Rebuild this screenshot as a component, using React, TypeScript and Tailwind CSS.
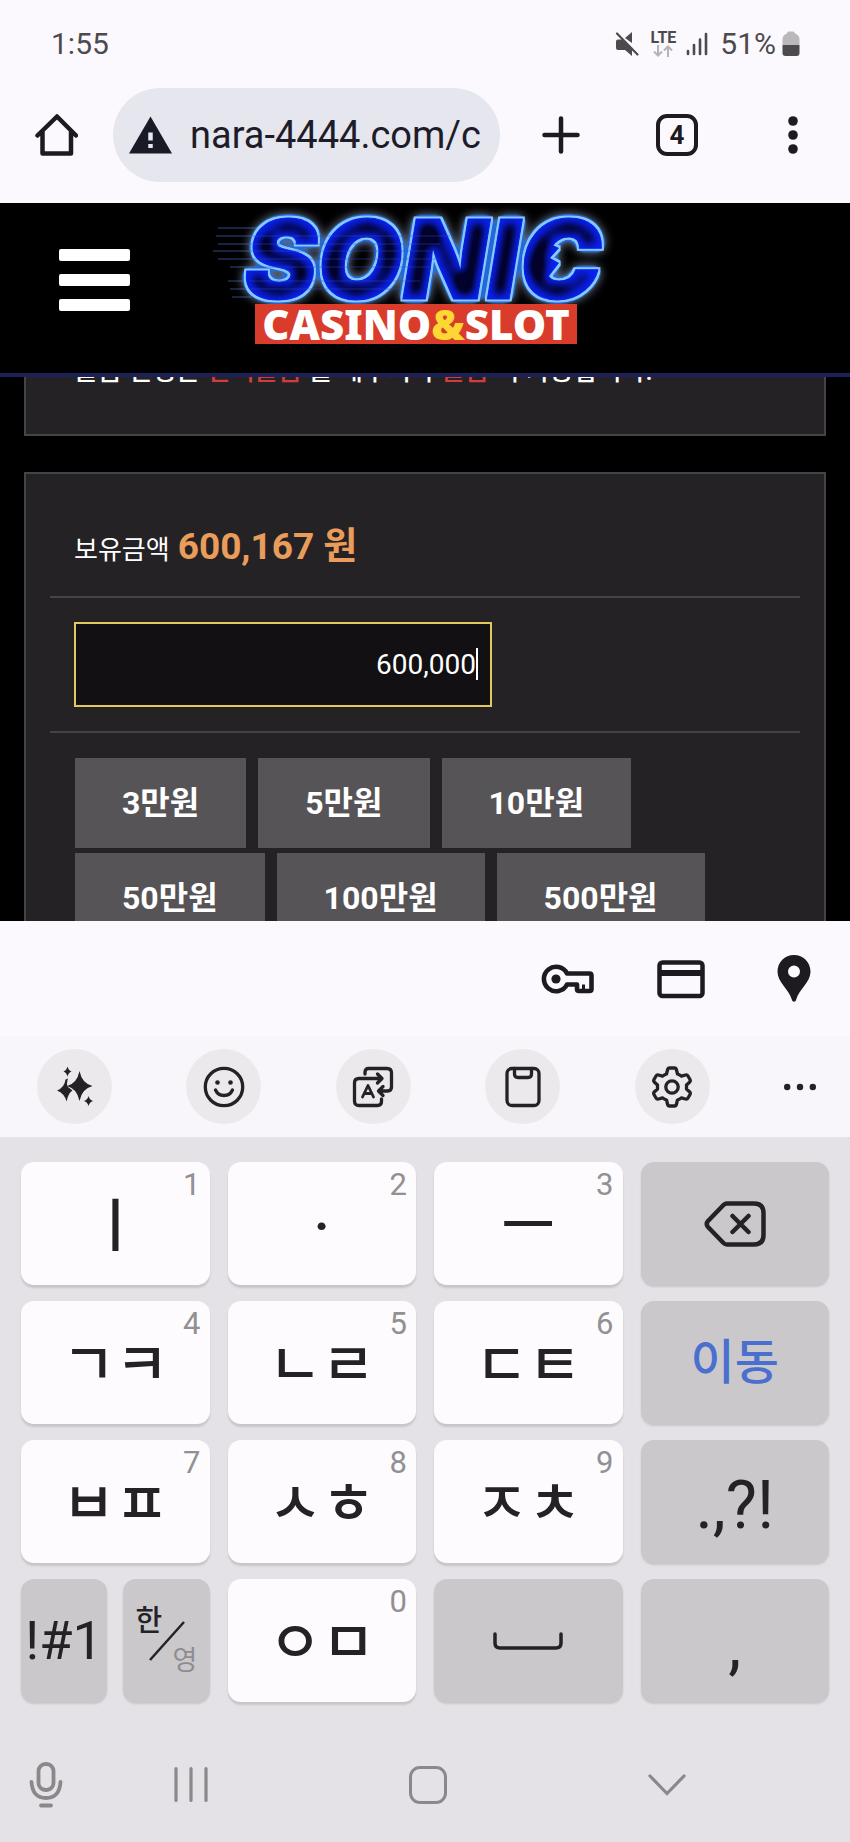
import React from 'react';

const fontStack = "font-[Roboto,'Noto_Sans_CJK_KR',sans-serif]";

const amountRows = [
  ['3만원', '5만원', '10만원'],
  ['50만원', '100만원', '500만원'],
];

function StatusBar() {
  return (
    <div className="flex h-[88px] items-center justify-between pl-[51px] pr-[50px] text-[30px] leading-none text-[#4c4a4d]">
      <span>1:55</span>
      <div className="flex items-center">
        {/* 음소거 */}
        <svg className="h-6 w-6" viewBox="0 0 24 24" fill="#4c4a4d">
          <path d="M1 9.500q0-2 2-2h4L17 17v7l-7-6H3q-2-0-2-2z" />
          <path d="M10 6l7-6v11z" />
          <path d="M2 1.500L22.500 22.500" stroke="#4c4a4d" strokeWidth="2.200" strokeLinecap="round" />
        </svg>
        <div className="ml-3 flex flex-col items-center">
          <span className="text-[16px] font-bold leading-[14px]">LTE</span>
          <svg className="h-3 w-5" viewBox="0 0 20 12" fill="none" stroke="#b5b3b6" strokeWidth="2">
            <path d="M5 0v10M1 6.500l4 4 4-4M15 12V2M11 5.500l4-4 4 4" />
          </svg>
        </div>
        <svg className="ml-[10px] h-6 w-[22px]" viewBox="0 0 22 24" stroke="#4c4a4d" strokeWidth="2.600" strokeLinecap="round">
          <path d="M2 19v3M8 13v9M14 7.500V22M20 2v20" />
        </svg>
        <span className="ml-3">51%</span>
        <svg className="ml-[6px] h-[26px] w-[18px]" viewBox="0 0 18 26">
          <path d="M5 2.500Q5 .5 7 .5h4q2 0 2 2Q17.500 4 17.500 8v6H.5V8Q.5 4 5 2.500z" fill="#bab8bb" />
          <path d="M.5 14h17v8q0 3-3 3h-11q-3 0-3-3z" fill="#4c4a4d" />
        </svg>
      </div>
    </div>
  );
}

function BrowserBar() {
  return (
    <div className="flex items-center pb-[21px] pl-[34px] pr-9">
      <button aria-label="홈" className="h-11 w-11">
        <svg viewBox="0 0 44 44" fill="none" stroke="#1d1b20" strokeWidth="4.500" strokeLinejoin="round" strokeLinecap="round">
          <path d="M3.500 22.500L23 3.500l19 19M8.500 19v21.500h28.500V19" />
        </svg>
      </button>
      <label className="ml-[35px] flex h-[94px] min-w-0 flex-1 items-center rounded-full bg-[#e5e6ee] pl-4 pr-[14px]">
        <svg className="h-[38px] w-[43px] shrink-0" viewBox="0 0 43 38">
          <path d="M21.500 .5L43 37.500H0z" fill="#181a26" />
          <path d="M21.500 16.500v8M21.500 28v4" stroke="#e5e6ee" strokeWidth="4.500" />
        </svg>
        <input
          aria-label="주소"
          defaultValue="nara-4444.com/c"
          className="ml-[18px] w-full min-w-0 bg-transparent text-[38px] leading-[48px] text-[#1d1c28] outline-none"
        />
      </label>
      <div className="ml-10 flex items-center gap-[74px]">
        <button aria-label="새 탭" className="h-[42px] w-[42px]">
          <svg viewBox="0 0 42 42" stroke="#1d1b20" strokeWidth="4.500" strokeLinecap="round">
            <path d="M21 4.500v33M4.500 21h33" />
          </svg>
        </button>
        <button className="flex h-[42px] w-[42px] items-center justify-center rounded-[11px] border-4 border-[#1d1b20] text-[26px] font-bold leading-none text-[#1d1b20]">
          4
        </button>
        <button aria-label="메뉴" className="h-[42px] w-[42px]">
          <svg viewBox="0 0 42 42" fill="#1d1b20">
            <circle cx="21" cy="7" r="4.800" />
            <circle cx="21" cy="21" r="4.800" />
            <circle cx="21" cy="35" r="4.800" />
          </svg>
        </button>
      </div>
    </div>
  );
}

function Logo() {
  return (
    <a href="#" className="flex w-[400px] flex-col">
      <svg className="h-[101px] w-full overflow-visible" viewBox="0 0 400 101">
        <defs>
          {/* 네온 효과: 외곽 글로우 + 파란 테두리 + 어두운 중심 */}
          <filter id="neon" x="-15%" y="-30%" width="130%" height="160%" colorInterpolationFilters="sRGB">
            <feGaussianBlur in="SourceAlpha" stdDeviation="3.500" result="soft" />
            <feComponentTransfer in="soft" result="halo">
              <feFuncA type="linear" slope="10" intercept="-1" />
            </feComponentTransfer>
            <feFlood floodColor="#2468d6" />
            <feComposite in2="halo" operator="in" result="haloBlue" />
            <feGaussianBlur in="halo" stdDeviation="5" result="glow" />
            <feFlood floodColor="#8494b4" floodOpacity="0.85" />
            <feComposite in2="glow" operator="in" result="glowColor" />
            <feMorphology in="SourceAlpha" operator="dilate" radius="1.500" result="edge" />
            <feFlood floodColor="#84caff" />
            <feComposite in2="edge" operator="in" result="edgeColor" />
            <feFlood floodColor="#0a20ee" />
            <feComposite in2="SourceAlpha" operator="in" result="body" />
            <feMorphology in="SourceAlpha" operator="erode" radius="6" result="thin" />
            <feGaussianBlur in="thin" stdDeviation="4" result="thinSoft" />
            <feComponentTransfer in="thinSoft" result="core">
              <feFuncA type="linear" slope="1.500" />
            </feComponentTransfer>
            <feFlood floodColor="#02022c" />
            <feComposite in2="core" operator="in" result="coreColor" />
            <feComposite in="coreColor" in2="SourceAlpha" operator="in" result="coreClip" />
            <feMerge>
              <feMergeNode in="glowColor" />
              <feMergeNode in="haloBlue" />
              <feMergeNode in="edgeColor" />
              <feMergeNode in="body" />
              <feMergeNode in="coreClip" />
            </feMerge>
          </filter>
        </defs>
        <path d="M8 25h50M6 33h50M8 41h40M3 48h50M8 56h40M20 64h30M18 78h20M20 86h20M22 94h20" stroke="#2a4a86" strokeWidth="1.200" />
        <g filter="url(#neon)">
          <text x="34" y="96" className="font-[Inter,sans-serif] text-[110px] font-black italic" stroke="#000" strokeWidth="1">
            SONIC
          </text>
          {/* C 안쪽 가시 */}
          <path d="M334 38l15 7-9 10 9 5-10 13-15-4z" />
        </g>
        <path d="M40 33h200M40 41h190M40 48h180M40 56h190M40 64h180M40 78h170M40 86h150" stroke="#2d4fc4" strokeWidth="1" opacity="0.45" />
      </svg>
      <div className="ml-[45px] flex h-10 w-[322px] items-center justify-center bg-[#d93c2b] font-['Noto_Sans',sans-serif] text-[42px] font-black leading-none text-white">
        CASINO<span className="text-[#fdd835]">&amp;</span>SLOT
      </div>
    </a>
  );
}

function SiteHeader() {
  return (
    <header className="relative z-10 flex h-[174px] items-start gap-20 border-b-4 border-[#1c2158] bg-black pl-[59px]">
      <button aria-label="메뉴 열기" className="mt-[46px] flex w-[71px] flex-col gap-[13px]">
        <span className="h-3 w-full rounded-[2px] bg-white" />
        <span className="h-3 w-full rounded-[2px] bg-white" />
        <span className="h-3 w-full rounded-[2px] bg-white" />
      </button>
      <Logo />
    </header>
  );
}

function WithdrawPage() {
  return (
    <main className="flex h-[544px] flex-col overflow-hidden bg-black px-6 text-white">
      {/* 안내 문구 (헤더 아래로 스크롤됨) */}
      <section className="-mt-10 shrink-0 border-2 border-[#454347] bg-[#242224] px-12 pb-[49px] pt-[18px]">
        <p className="whitespace-nowrap text-[26px] font-medium leading-7">
          출금 신청은 <span className="text-[#d23c3c]">전액출금</span> 을 해주셔야 <span className="text-[#d23c3c]">출금</span> 이 가능합니다.
        </p>
      </section>

      <section className="mt-9 shrink-0 border-2 border-[#454347] bg-[#242224] px-6 pt-12">
        <p className="flex h-[76px] items-start gap-2 border-b-2 border-[#454347] px-6 text-[26px] leading-[56px]">
          보유금액 <strong className="text-[37px] font-bold leading-[50px] text-[#ea9d5b]">600,167 원</strong>
        </p>
        <div className="border-b-2 border-[#454347] px-6 py-6">
          <div className="relative w-[418px]">
            <input
              aria-label="출금금액"
              defaultValue="600,000"
              className="block h-[85px] w-full border-2 border-[#e2c95f] bg-[#121012] pr-[14px] text-right text-[28px] outline-none"
            />
            <span className="absolute right-[14px] top-[26px] h-8 w-[2px] bg-white" />
          </div>
        </div>
        <div className="flex flex-col gap-[5px] px-[25px] pt-[25px]">
          {amountRows.map((row) => (
            <div key={row[0]} className="flex gap-3">
              {row.map((label) => (
                <button key={label} className="h-[90px] bg-[#565457] px-[47px] text-[32px] font-bold">
                  {label}
                </button>
              ))}
            </div>
          ))}
        </div>
      </section>
    </main>
  );
}

function AutofillBar() {
  return (
    <div className="flex h-[115px] items-center justify-end gap-[57px] bg-[#fcf9fe] pr-[28px]">
      <button aria-label="비밀번호" className="h-14 w-14">
        <svg viewBox="0 0 56 56" fill="none" stroke="#1d1b20" strokeWidth="4.600" strokeLinejoin="round">
          <path d="M27 22.500A12.200 12.200 0 1 0 27 33.500H37V38q0 2 2 2H49.500q2 0 2-2V24.500q0-2-2-2z" />
          <circle cx="16" cy="28" r="4.600" fill="#1d1b20" stroke="none" />
          <path d="M43.500 40v-6.500" strokeWidth="3" />
        </svg>
      </button>
      <button aria-label="결제 수단" className="h-14 w-14">
        <svg viewBox="0 0 56 56" fill="none" stroke="#1d1b20">
          <rect x="6.500" y="11.500" width="43" height="33.500" rx="3" strokeWidth="4.500" />
          <path d="M6 22h44" strokeWidth="6" />
        </svg>
      </button>
      <button aria-label="주소" className="h-14 w-14">
        <svg viewBox="0 0 56 56" fill="#1d1b20">
          <path fillRule="evenodd" d="M28 4c-9.200 0-16.500 7.300-16.500 16.500 0 11 11 17 14.300 28 .7 3 3.700 3 4.400 0 3.300-11 14.300-17 14.300-28C44.500 11.300 37.200 4 28 4zm0 10.500a6 6 0 1 1 0 12 6 6 0 0 1 0-12z" />
        </svg>
      </button>
    </div>
  );
}

function ToolButton({ label, children }: { label: string; children: React.ReactNode }) {
  return (
    <button aria-label={label} className="flex h-[75px] w-[75px] items-center justify-center rounded-full bg-[#ebe9ec]">
      <svg className="h-11 w-11" viewBox="0 0 44 44" fill="none" stroke="#242226" strokeWidth="3.300" strokeLinecap="round" strokeLinejoin="round">
        {children}
      </svg>
    </button>
  );
}

function KeyboardTools() {
  return (
    <div className="flex h-[101px] items-center justify-between bg-[#f8f6fa] pl-[37px] pr-[34px]">
      <ToolButton label="AI">
        <g fill="#242226" stroke="none">
          <path d="M26.500 6q2.500 12.500 13 15-10.500 2.500-13 15-2.500-12.500-12.500-15Q24 18.500 26.500 6z" />
          <path d="M14.500 1.500q1 4 4 5-3 1-4 5-1-4-4-5 3-1 4-5z" />
          <path d="M35.500 31q1 4 4.500 5-3.500 1-4.500 5-1-4-4.500-5 3.500-1 4.500-5z" />
          <path d="M12.500 14.500l2.500-1q-2 6 0 8.500l4.500 3.500q-4 2-6 11-2-8-9.500-11 7.500-3 8.500-11z" />
        </g>
      </ToolButton>
      <ToolButton label="이모티콘">
        <circle cx="22" cy="22" r="18.700" />
        <path d="M13.500 25q2.500 5.500 8.500 5.500t8.500-5.500" />
        <circle cx="15.500" cy="17.500" r="2.300" fill="#242226" stroke="none" />
        <circle cx="28.500" cy="17.500" r="2.300" fill="#242226" stroke="none" />
      </ToolButton>
      <ToolButton label="번역">
        <path d="M14 9V7q0-3.500 3.500-3.500H36q4.500 0 4.500 4.500v14q0 4-4 4h-8M32 21.500L27.500 26l4.500 4.500" />
        <path d="M30.500 34v2.500q0 4-4 4H8q-4.500 0-4.500-4.500V18q0-4.500 4.500-4.500h23M26.500 9l4.500 4.500-4.500 4.500" />
        <path d="M11.500 32L17 20.500 22.500 32M13.500 28.500h7" strokeWidth="2.800" />
      </ToolButton>
      <ToolButton label="클립보드">
        <rect x="6" y="3.500" width="32" height="37" rx="5" />
        <path d="M13.500 3.500V9q0 3.500 3.500 3.500h10q3.500 0 3.500-3.500V3.500" />
      </ToolButton>
      <ToolButton label="설정">
        {/* 톱니 6개 */}
        <path d="M17.500 5q.5-2 2-2h5q1.500 0 2 2l1 4q2 .7 4 2.200l4-1.200q1.700-.5 2.500 1l2 3.500q.8 1.500-.5 2.700l-3 2.800v4l3 2.800q1.300 1.200.5 2.700l-2 3.500q-.8 1.500-2.500 1l-4-1.200q-2 1.500-4 2.200l-1 4q-.5 2-2 2h-5q-1.500 0-2-2l-1-4q-2-.7-4-2.200l-4 1.200q-1.700.5-2.500-1l-2-3.500q-.8-1.500.5-2.700l3-2.800v-4l-3-2.800q-1.300-1.200-.5-2.700l2-3.500q.8-1.500 2.500-1l4 1.200q2-1.500 4-2.200z" />
        <circle cx="22" cy="22" r="6.200" />
      </ToolButton>
      <button aria-label="더보기" className="h-8 w-8">
        <svg viewBox="0 0 32 32" fill="#242226">
          <circle cx="3.200" cy="16" r="3.200" />
          <circle cx="16" cy="16" r="3.200" />
          <circle cx="28.800" cy="16" r="3.200" />
        </svg>
      </button>
    </div>
  );
}

function LetterKey({ letters, hint }: { letters: string; hint: string }) {
  return (
    <button className="relative flex h-[123px] items-center justify-center rounded-[13px] bg-[#fdfbfe] pt-1 text-[58px] font-medium leading-none text-[#242226] shadow-[0_3px_2px_#c8c6c9]">
      <span>{letters}</span>
      <span className="absolute right-[9px] top-[7px] text-[31px] font-normal leading-8 text-[#929093]">{hint}</span>
    </button>
  );
}

function FunctionKey({ label, className = 'text-[#242226]', children }: { label: string; className?: string; children: React.ReactNode }) {
  return (
    <button
      aria-label={label}
      className={`flex h-[123px] items-center justify-center rounded-[13px] bg-[#cac8cb] shadow-[0_2px_2px_#c8c6c9] ${className}`}
    >
      {children}
    </button>
  );
}

function Keyboard() {
  return (
    <div className="grid grid-cols-4 gap-x-[18px] gap-y-4 px-[21px] pt-[25px]">
      <LetterKey letters="ㅣ" hint="1" />
      <LetterKey letters="·" hint="2" />
      <LetterKey letters="ㅡ" hint="3" />
      <FunctionKey label="지우기">
        <svg className="h-[46px] w-[62px]" viewBox="0 0 62 46" fill="none" stroke="#242226" strokeWidth="4.500" strokeLinecap="round" strokeLinejoin="round">
          <path d="M23 2.500h27q9.500 0 9.500 9.500v22q0 9.500-9.500 9.500H23q-2 0-3.500-1.500L4 26q-2.500-3 0-6L19.500 4q1.500-1.500 3.500-1.500zM28.500 15l16 16M44.500 15l-16 16" />
        </svg>
      </FunctionKey>

      <LetterKey letters="ㄱㅋ" hint="4" />
      <LetterKey letters="ㄴㄹ" hint="5" />
      <LetterKey letters="ㄷㅌ" hint="6" />
      <FunctionKey label="이동" className="text-[48px] font-medium text-[#4a6fce]">이동</FunctionKey>

      <LetterKey letters="ㅂㅍ" hint="7" />
      <LetterKey letters="ㅅㅎ" hint="8" />
      <LetterKey letters="ㅈㅊ" hint="9" />
      <FunctionKey label="문장 부호" className="pt-2 text-[66px] leading-none text-[#242226]">.,?!</FunctionKey>

      <div className="grid grid-cols-2 gap-4">
        <FunctionKey label="기호" className="text-[54px] leading-none text-[#242226]">!#1</FunctionKey>
        <FunctionKey label="한영 전환">
          <span className="relative block h-[72px] w-[62px]">
            <span className="absolute left-0 top-0 text-[29px] font-medium leading-8 text-[#242226]">한</span>
            <svg className="absolute inset-0 h-full w-full" viewBox="0 0 62 72" stroke="#242226" strokeWidth="2.500">
              <path d="M15 55L49 17" />
            </svg>
            <span className="absolute bottom-0 right-0 text-[27px] leading-8 text-[#8e8c8f]">영</span>
          </span>
        </FunctionKey>
      </div>
      <LetterKey letters="ㅇㅁ" hint="0" />
      <FunctionKey label="스페이스">
        <svg className="h-[18px] w-[70px]" viewBox="0 0 70 18" fill="none" stroke="#242226" strokeWidth="3.500" strokeLinecap="round">
          <path d="M2 2v9q0 5 5 5h56q5 0 5-5V2" />
        </svg>
      </FunctionKey>
      <FunctionKey label="쉼표" className="pt-2 text-[66px] leading-none text-[#242226]">,</FunctionKey>
    </div>
  );
}

function NavigationBar() {
  return (
    <nav className="flex h-[138px] items-center pt-7 pl-[29px]">
      <button aria-label="음성 입력" className="h-[46px] w-[34px]">
        <svg viewBox="0 0 34 46" fill="none" stroke="#8a888b" strokeWidth="3.800" strokeLinecap="round">
          <rect x="9.500" y="2" width="15" height="26" rx="7" />
          <path d="M2.500 20q1 16 14.500 16t14.500-16M12 43.500h10" />
        </svg>
      </button>
      <div className="flex flex-1 items-center justify-between pl-[110px] pr-[162px]">
        <button aria-label="최근 앱" className="h-[38px] w-9">
          <svg viewBox="0 0 36 38" stroke="#8a888b" strokeWidth="3.200" strokeLinecap="round">
            <path d="M3 2.500v32M18 2.500v32M33 2.500v32" />
          </svg>
        </button>
        <button aria-label="홈 화면" className="h-[38px] w-[38px] rounded-[11px] border-[3px] border-[#8a888b]" />
        <button aria-label="키보드 닫기" className="h-[38px] w-[42px]">
          <svg viewBox="0 0 42 38" fill="none" stroke="#8a888b" strokeWidth="3.200" strokeLinecap="round">
            <path d="M4 10l17 17.500L38 10" />
          </svg>
        </button>
      </div>
    </nav>
  );
}

export default function App() {
  return (
    <div className={`flex min-h-screen flex-col bg-[#fcf9fe] ${fontStack}`}>
      <StatusBar />
      <BrowserBar />
      <SiteHeader />
      <WithdrawPage />
      <AutofillBar />
      <KeyboardTools />
      <div className="flex-1 bg-[#e4e2e6]">
        <Keyboard />
        <NavigationBar />
      </div>
    </div>
  );
}
